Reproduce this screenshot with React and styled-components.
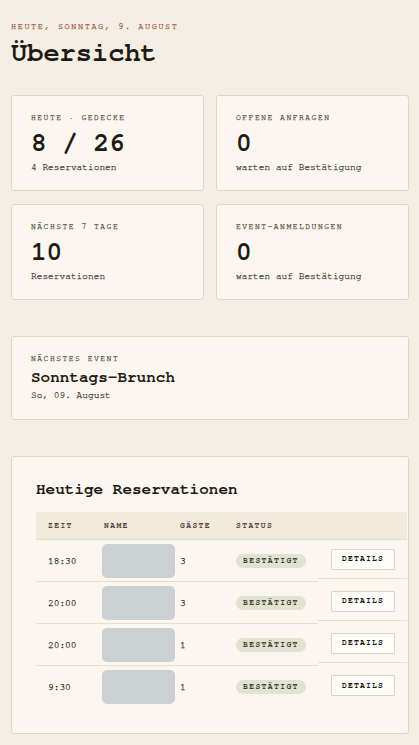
import React from "react";
import styled, { createGlobalStyle, css } from "styled-components";

const Global = createGlobalStyle`
  html, body { margin: 0; padding: 0; }
  body {
    background: #f5eee4;
    font-family: FreeMono, "Liberation Mono", "Courier New", monospace;
    color: #1f1a14;
  }
`;

// thin mono strokes read a little heavier at small sizes
const fineText = css`
  -webkit-text-stroke: 0.25px currentColor;
`;

const Page = styled.div`
  padding: 21px 10px 12px 11px;
`;

const DateLine = styled.div`
  ${fineText};
  font-size: 8.5px;
  line-height: 12px;
  letter-spacing: 1.6px;
  text-transform: uppercase;
  color: #94603a;
`;

const Title = styled.h1`
  margin: 4px 0 0;
  font-size: 27px;
  line-height: 32px;
  font-weight: 700;
  color: #1f1a14;
`;

const StatGrid = styled.div`
  display: grid;
  grid-template-columns: 1fr 1fr;
  gap: 13px 12px;
  margin-top: 26px;
`;

const Card = styled.section`
  background: #fbf7f0;
  border: 1px solid #e0d6c6;
  border-radius: 3px;
  padding: ${(p) => p.$pad || "16px 19px"};
  margin-top: ${(p) => p.$top || "0"};
`;

const Label = styled.div`
  ${fineText};
  font-size: 8px;
  line-height: 12px;
  letter-spacing: 1.5px;
  text-transform: uppercase;
  color: #5a5047;
`;

const Value = styled.div`
  margin-top: 4px;
  font-size: 26px;
  line-height: 30px;
  font-weight: 700;
  color: #1f1a14;
`;

const Sub = styled.div`
  ${fineText};
  margin-top: ${(p) => p.$gap || "2px"};
  font-size: 9.5px;
  line-height: 14px;
  color: #4a4138;
`;

const EventName = styled.div`
  margin-top: 2px;
  font-size: 16px;
  line-height: 20px;
  font-weight: 700;
`;

const SectionTitle = styled.h2`
  margin: 0 0 13px;
  font-size: 16px;
  line-height: 20px;
  font-weight: 700;
`;

const Table = styled.div`
  margin-right: -23px;
`;

const cols = "64px 76px 56px 86px 1fr";

const HeadRow = styled.div`
  display: grid;
  grid-template-columns: ${cols};
  height: 27px;
  align-items: center;
  background: #f2eadc;
  border-bottom: 1px solid #e6dccb;
`;

const Th = styled.div`
  padding-left: ${(p) => (p.$first ? "12px" : "4px")};
  font-size: 8px;
  font-weight: 700;
  letter-spacing: 1.4px;
  text-transform: uppercase;
  color: #54473a;
`;

const Row = styled.div`
  display: grid;
  grid-template-columns: ${cols};
  min-height: 42px;
`;

const Td = styled.div`
  ${fineText};
  display: flex;
  align-items: center;
  padding-left: ${(p) => (p.$first ? "12px" : "4px")};
  font-size: 9.5px;
  color: #1f1a14;
  border-bottom: ${(p) => (p.$last ? "none" : "1px solid #e8dfd1")};
`;

const ActionCell = styled(Td)`
  padding-left: 13px;
  margin-bottom: 3px;
`;

const NameBlur = styled.div`
  width: 73px;
  height: 34px;
  margin-left: -2px;
  border-radius: 5px;
  background: #cbd0d3;
`;

const Pill = styled.span`
  display: inline-block;
  padding: 0 7px;
  height: 14px;
  line-height: 14px;
  border-radius: 7px;
  background: #e2e2d3;
  font-size: 8px;
  font-weight: 700;
  letter-spacing: 1.4px;
  color: #3b4630;
  -webkit-text-stroke: 0;
`;

const DetailsButton = styled.button`
  width: 64px;
  height: 21px;
  padding: 0;
  background: #fffdf9;
  border: 1px solid #ddd4c6;
  border-radius: 1px;
  font-family: inherit;
  font-size: 8px;
  font-weight: 700;
  letter-spacing: 1.2px;
  color: #1a1712;
  -webkit-text-stroke: 0;
  cursor: pointer;
`;

const stats = [
  { label: "Heute · Gedecke", value: "8 / 26", sub: "4 Reservationen" },
  { label: "Offene Anfragen", value: "0", sub: "warten auf Bestätigung" },
  { label: "Nächste 7 Tage", value: "10", sub: "Reservationen" },
  { label: "Event-Anmeldungen", value: "0", sub: "warten auf Bestätigung" },
];

const reservations = [
  { time: "18:30", guests: 3 },
  { time: "20:00", guests: 3 },
  { time: "20:00", guests: 1 },
  { time: "9:30", guests: 1 },
];

export default function App() {
  return (
    <>
      <Global />
      <Page>
        <DateLine>Heute, Sonntag, 9. August</DateLine>
        <Title>Übersicht</Title>

        <StatGrid>
          {stats.map((s) => (
            <Card key={s.label}>
              <Label>{s.label}</Label>
              <Value>{s.value}</Value>
              <Sub>{s.sub}</Sub>
            </Card>
          ))}
        </StatGrid>

        <Card $top="36px" $pad="16px 19px 17px">
          <Label>Nächstes Event</Label>
          <EventName>Sonntags-Brunch</EventName>
          <Sub $gap="1px">So, 09. August</Sub>
        </Card>

        <Card $top="36px" $pad="22px 24px 25px">
          <SectionTitle>Heutige Reservationen</SectionTitle>
          <Table>
            <HeadRow>
              <Th $first>Zeit</Th>
              <Th>Name</Th>
              <Th>Gäste</Th>
              <Th>Status</Th>
              <Th />
            </HeadRow>
            {reservations.map((r, i) => {
              const last = i === reservations.length - 1;
              return (
                <Row key={i}>
                  <Td $first $last={last}>{r.time}</Td>
                  <Td $last={last}><NameBlur /></Td>
                  <Td $last={last}>{r.guests}</Td>
                  <Td $last={last}><Pill>BESTÄTIGT</Pill></Td>
                  <ActionCell $last={last}>
                    <DetailsButton>DETAILS</DetailsButton>
                  </ActionCell>
                </Row>
              );
            })}
          </Table>
        </Card>
      </Page>
    </>
  );
}
